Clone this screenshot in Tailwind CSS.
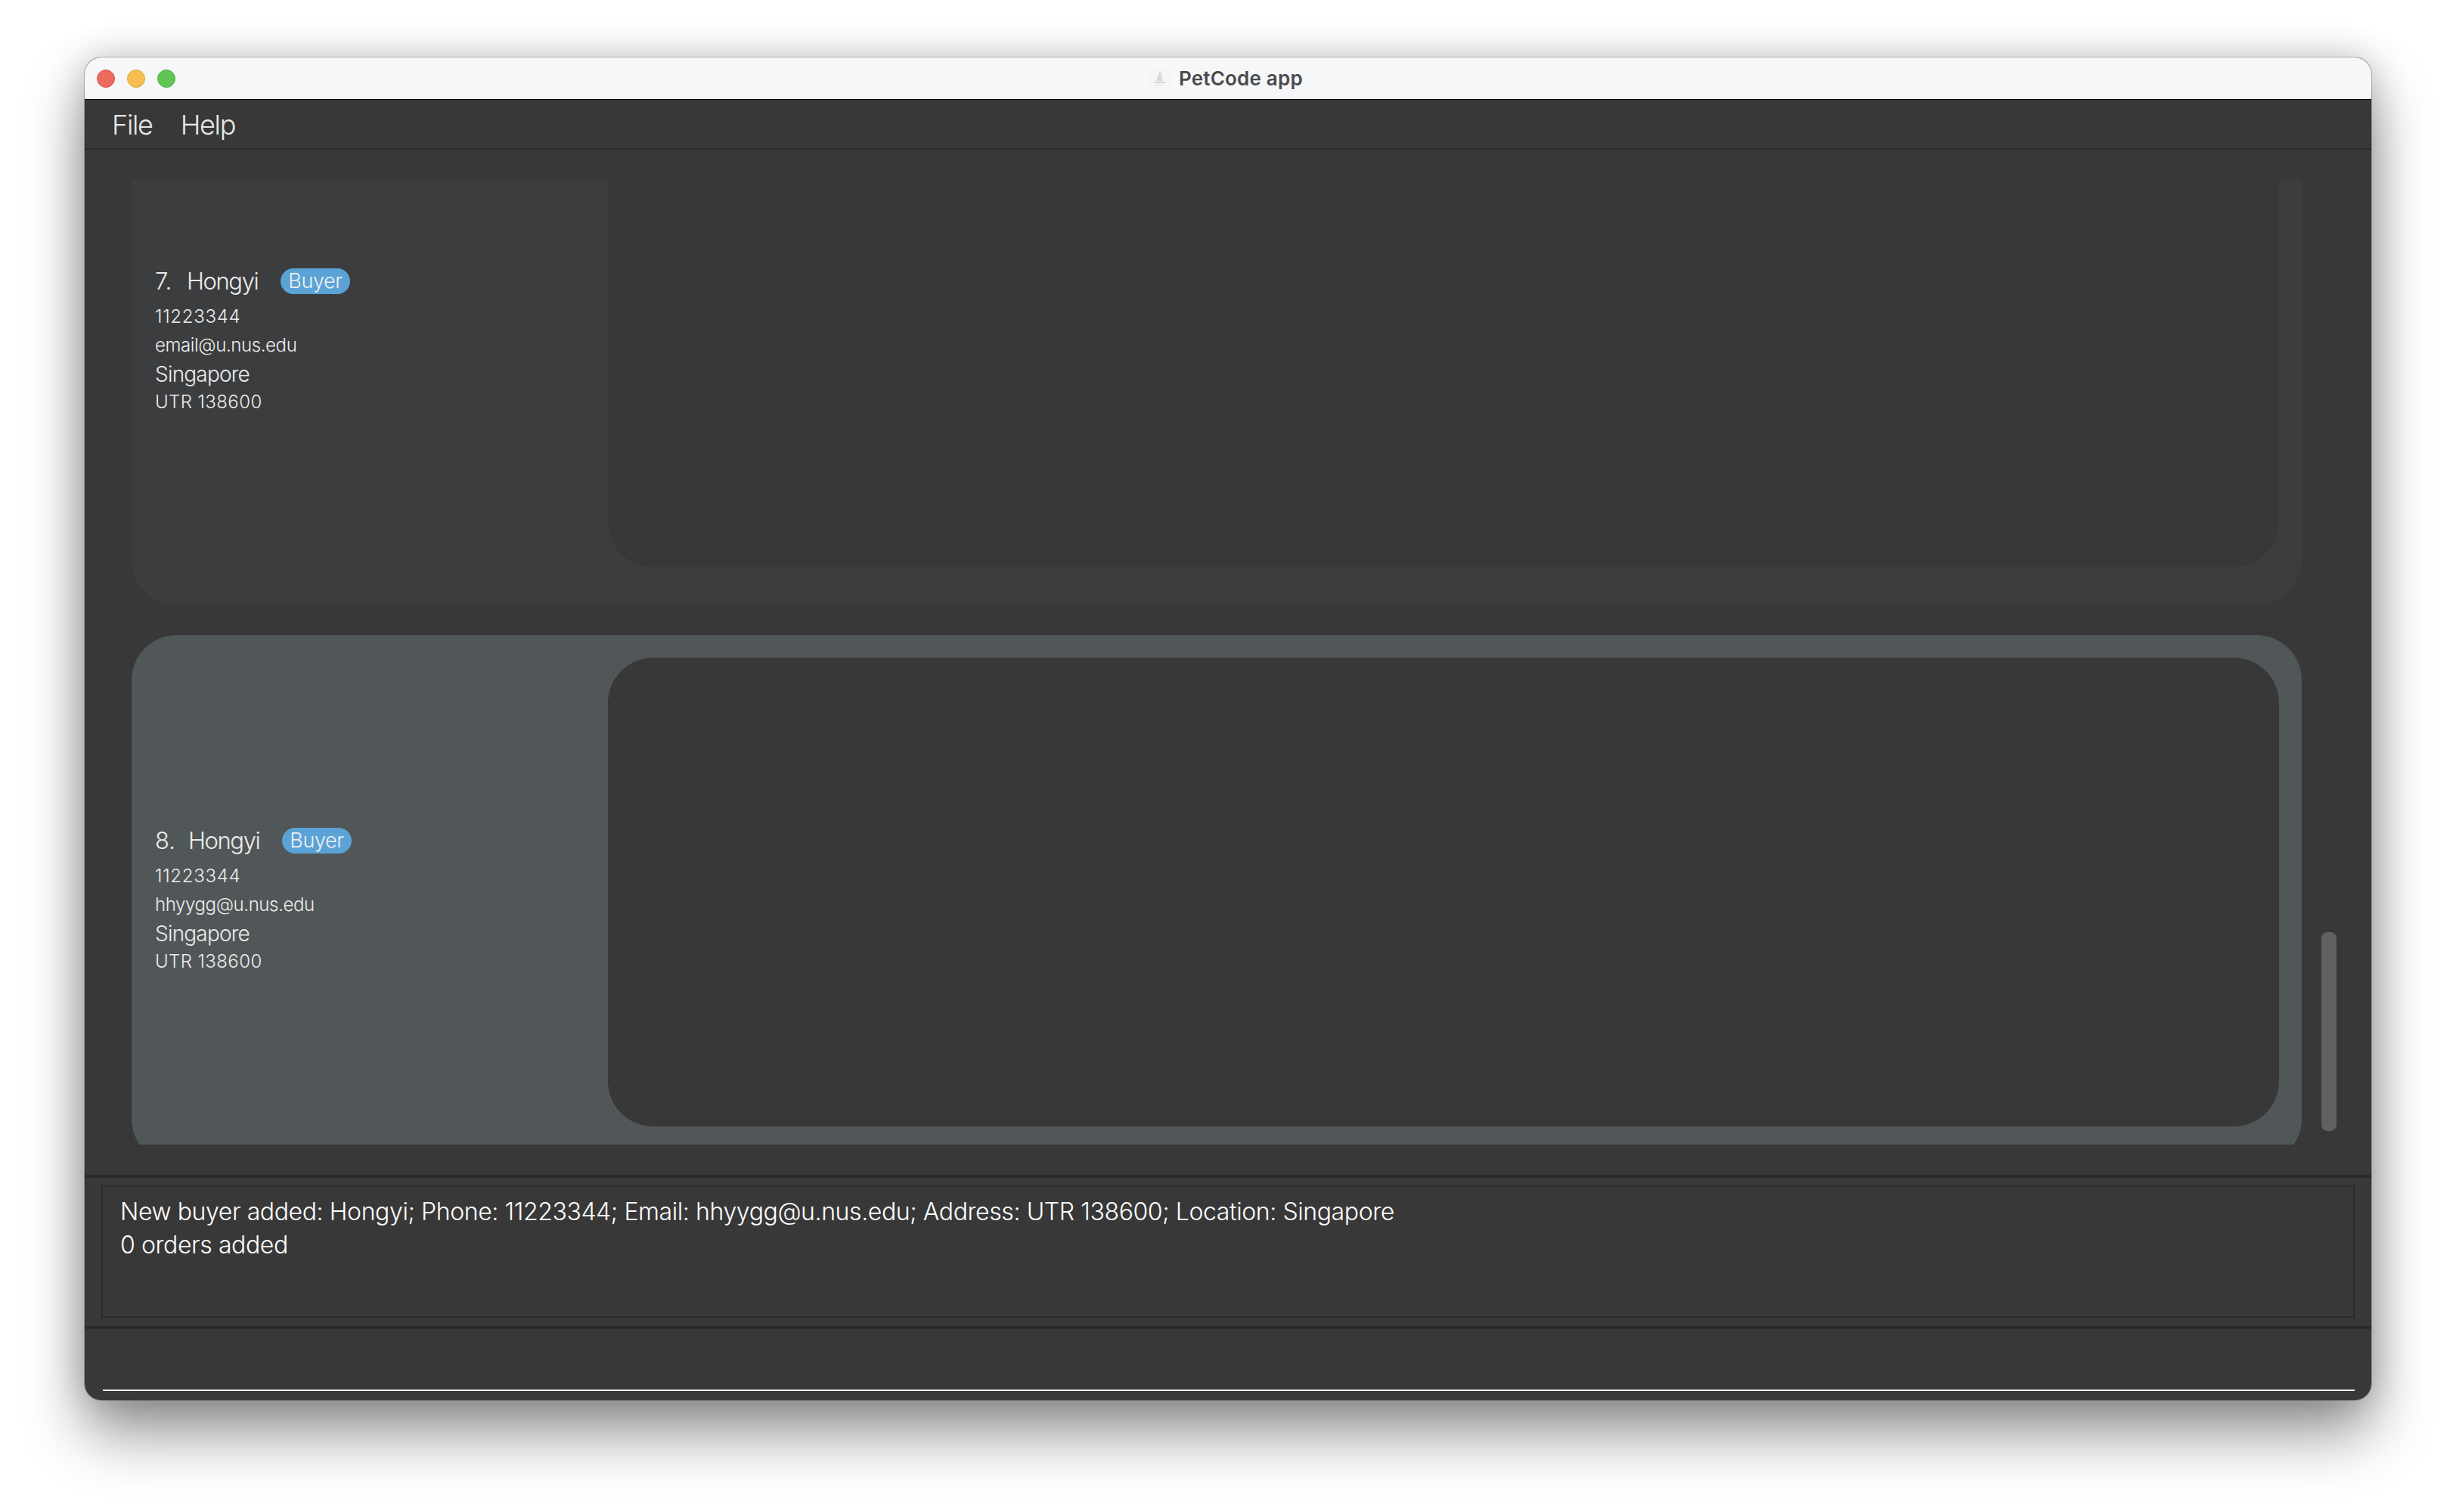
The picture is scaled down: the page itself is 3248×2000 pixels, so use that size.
<!DOCTYPE html>
<html lang="en">

<head>
    <meta charset="UTF-8">
    <title>PetCode app</title>
    <script src="https://cdn.jsdelivr.net/npm/@tailwindcss/browser@4"></script>
</head>

<body class="w-[3248px] h-[2000px] bg-white overflow-hidden font-['Inter',sans-serif]">

    <!-- Window -->
    <div class="ml-[112px] mt-[76px] w-[3024px] h-[1776px] flex flex-col rounded-[22px] overflow-hidden bg-[#383838] shadow-[0_0_0_1px_rgba(0,0,0,0.22),0_44px_80px_rgba(0,0,0,0.42),0_0_50px_rgba(0,0,0,0.2)]">

        <!-- Title bar -->
        <div class="relative h-[56px] shrink-0 flex items-center bg-[#f6f7f9] border-b border-black">
            <div class="flex gap-[16px] pl-[16px]">
                <div class="w-[24px] h-[24px] rounded-full bg-[#ed6a5e] border border-[#d5574c]"></div>
                <div class="w-[24px] h-[24px] rounded-full bg-[#f5bf4f] border border-[#d9a53f]"></div>
                <div class="w-[24px] h-[24px] rounded-full bg-[#61c554] border border-[#52ad46]"></div>
            </div>
            <div class="absolute left-[1408px] top-0 h-[55px] flex items-center gap-[11px]">
                <svg class="w-[28px] h-[28px]" viewBox="0 0 28 28">
                    <rect width="28" height="28" fill="#f5f5f3" />
                    <path d="M14 4l3 6h-6zM11 11l5 0 2 6H9zM7 18h14v2H7z" fill="#d6d6d4" />
                    <path d="M8 22h12v1H8z" fill="#e2e2e0" />
                </svg>
                <span class="text-[26px] leading-[32px] font-semibold text-[#4a4a4a] tracking-[0.2px]">PetCode app</span>
            </div>
        </div>

        <!-- Menu -->
        <div class="h-[66px] shrink-0 flex items-center gap-[37px] pl-[36px] pt-[2px] border-b-2 border-[#2b2b2b] text-[36px] font-[350] leading-[44px] tracking-[-1.3px] text-[#e8e8e8]">
            <span>File</span>
            <span>Help</span>
        </div>

        <!-- Person list -->
        <div class="h-[1356px] shrink-0 flex pl-[62px] pt-[40px]">
            <div class="w-[2870px] h-[1276px] overflow-hidden">
                <div class="-mt-[138px] flex flex-col gap-[40px]">

                    <div class="h-[700px] rounded-[60px] bg-[#3c3d3f] flex pl-[31px] pr-[30px] pt-[30px] pb-[50px]">
                        <div class="w-[599px] shrink-0 pt-[22px] flex flex-col justify-center text-[#ececec] font-[350]">
                            <div class="h-[40px] flex items-center text-[31px] leading-[40px]">
                                <span class="w-[42px]">7.</span>
                                <span class="w-[124px] tracking-[-1.4px]">Hongyi</span>
                                <span class="h-[34px] w-[92px] flex items-center justify-center rounded-full bg-[#5ba3d6] text-[27px] text-[#f0f0f0] tracking-[-0.4px]">Buyer</span>
                            </div>
                            <div class="mt-[8px] text-[24px] leading-[38px] tracking-[0.7px]">11223344</div>
                            <div class="text-[24px] leading-[38px] tracking-[-0.4px]">email@u.nus.edu</div>
                            <div class="text-[28px] leading-[38px] tracking-[-0.8px]">Singapore</div>
                            <div class="text-[24px] leading-[36px] tracking-[0.4px]">UTR 138600</div>
                        </div>
                        <div class="flex-1 rounded-[60px] bg-[#383838]"></div>
                    </div>

                    <div class="h-[700px] rounded-[60px] bg-[#515658] flex pl-[31px] pr-[30px] pt-[30px] pb-[50px]">
                        <div class="w-[599px] shrink-0 pt-[22px] flex flex-col justify-center text-[#ececec] font-[350]">
                            <div class="h-[40px] flex items-center text-[31px] leading-[40px]">
                                <span class="w-[44px]">8.</span>
                                <span class="w-[124px] tracking-[-1.4px]">Hongyi</span>
                                <span class="h-[34px] w-[92px] flex items-center justify-center rounded-full bg-[#5ba3d6] text-[27px] text-[#f0f0f0] tracking-[-0.4px]">Buyer</span>
                            </div>
                            <div class="mt-[8px] text-[24px] leading-[38px] tracking-[0.7px]">11223344</div>
                            <div class="text-[24px] leading-[38px] tracking-[-0.4px]">hhyygg@u.nus.edu</div>
                            <div class="text-[28px] leading-[38px] tracking-[-0.8px]">Singapore</div>
                            <div class="text-[24px] leading-[36px] tracking-[0.4px]">UTR 138600</div>
                        </div>
                        <div class="flex-1 rounded-[60px] bg-[#383838]"></div>
                    </div>

                </div>
            </div>
            <!-- Scrollbar -->
            <div class="ml-[26px] w-[20px]">
                <div class="mt-[995px] h-[263px] rounded-[8px] bg-[#606060]"></div>
            </div>
        </div>

        <!-- Result display -->
        <div class="h-[204px] shrink-0 pt-[10px] px-[22px] border-t-4 border-b-4 border-[#2b2b2b]">
            <div class="h-[175px] border-2 border-[#2b2b2b] pl-[23px] pt-[11px] text-[32px] leading-[44px] font-[350] tracking-[-0.4px] text-white">
                <div>New buyer added: Hongyi; Phone: 11223344; Email: hhyygg@u.nus.edu; Address: UTR 138600; Location: Singapore</div>
                <div>0 orders added</div>
            </div>
        </div>

        <!-- Command box -->
        <div class="flex-1 pl-[24px] pr-[22px] pt-[76px]">
            <input type="text" class="block w-full h-[6px] bg-transparent border-b-2 border-white outline-none">
        </div>
    </div>

</body>

</html>
